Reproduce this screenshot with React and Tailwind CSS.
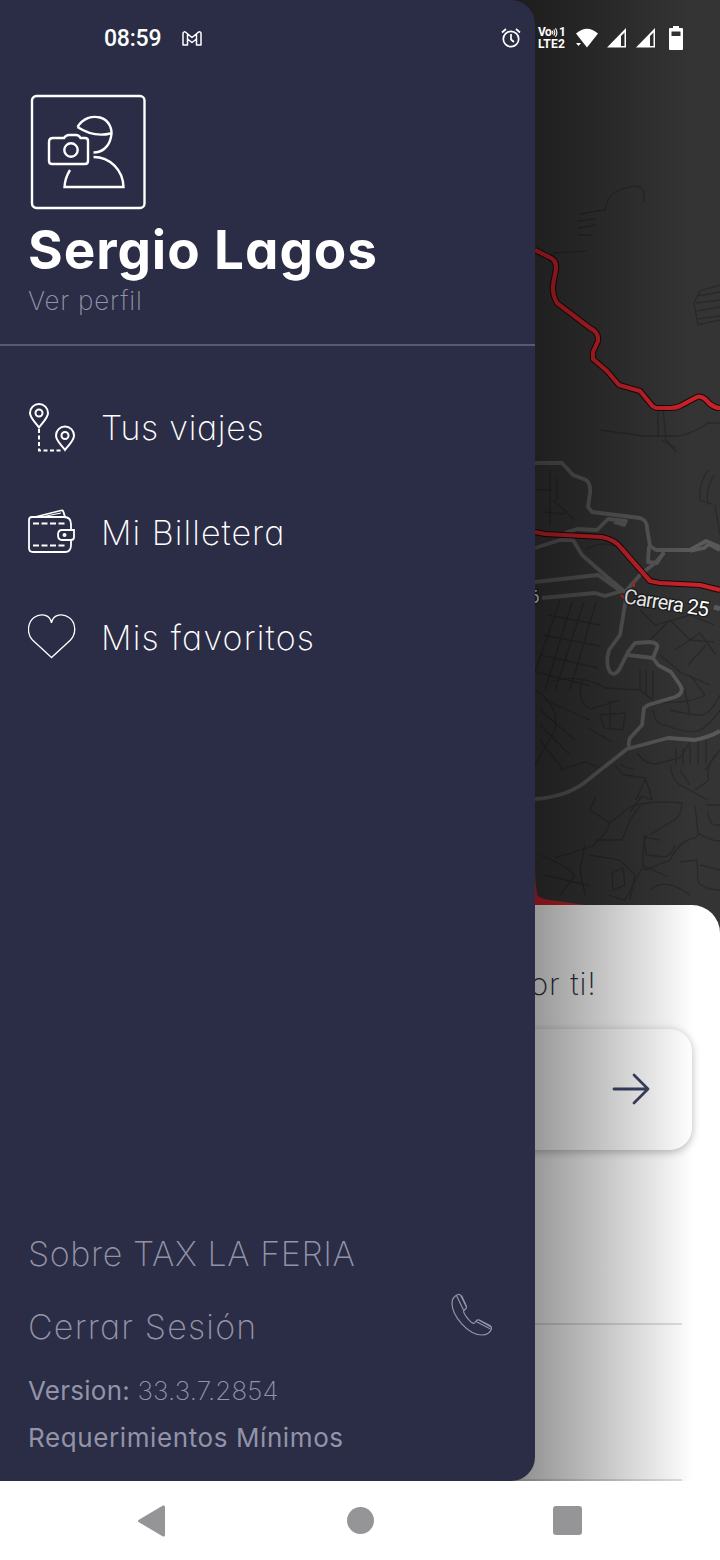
const MENU_ITEMS = [
    { label: 'Tus viajes',    icon: TripsIcon,  spacing: 'tracking-[0.7px]' },
    { label: 'Mi Billetera',  icon: WalletIcon, spacing: 'tracking-[1.05px]' },
    { label: 'Mis favoritos', icon: HeartIcon,  spacing: 'tracking-[1.2px]' },
];

const MINOR_ROADS = [
    'M535 463H562L573 475L586 480Q591 484 590 493L588 507L592 512L640 518Q647 520 647 528L650 546L656 550H690L706 541L720 547',
    'M690 551L704 548L709 544L720 550',
    'M535 548L560 540L573 540L582 555L606 576L625 592L640 575L655 563L664 553',
    'M565 533L577 529L597 530L608 519L626 521L624 525L614 522',
    'M535 582L598 575L622 592',
    'M542 598L595 593L605 596L622 591',
    'M627 592L620 635L609 650Q605 664 610 672Q615 677 620 668L628 652L635 643L650 642Q659 643 657 648L653 658L628 655',
    'M653 658L658 665L671 672L680 685Q685 693 675 697L648 705L644 708L642 725L630 738Q627 745 631 749',
    'M535 799Q565 797 584 783L627 749L668 738L695 740Q710 737 720 731',
    'M649 546L648 562L657 563L664 552',
];

const STREETS = [
    'M605 212Q607 194 620 190Q640 182 644 192V202M580 214Q590 212 604 210M578 221L595 219M578 228L596 225M578 235L592 235',
    'M720 285L700 291L694 303L698 325L720 320M697 296L720 292M696 303L720 300M697 311L720 307M698 319L720 316',
    'M553 253L586 251M600 430L645 436H680Q700 430 708 423H720M658 409V435M663 409L666 440L676 452',
    'M708 470Q698 485 700 500L712 504M714 475Q705 490 708 505M662 440L676 448M715 505L720 535',
    'M550 470V525M536 490H552M557 478V500M543 512L565 514M553 500L575 520M585 550Q605 538 622 550',
    'M560 600L535 672M572 602L545 690M584 602L555 690M596 602L570 690M548 615L600 625M543 635L600 646M540 655L598 668M537 672L590 686',
    'M640 610L655 625L690 615L714 625M650 640L670 620L690 640L714 642M675 650L700 633L716 655M688 665L706 645M660 655L680 672L710 685',
    'M535 690Q560 705 555 730L535 765M550 682Q570 676 585 680T605 688L640 690L655 702Q690 704 705 695L690 675M583 680Q575 700 590 709L620 700',
    'M540 710L575 740M540 725L570 755M540 740L562 768M545 700L590 720M600 715L625 713L623 730L604 728ZM610 700V728M588 728L612 742',
    'M640 670V690M646 670V695M653 670V698M653 710Q655 725 665 725Q690 735 700 730T720 710M670 710Q690 715 700 715T720 695M685 690L690 715',
    'M637 753Q645 764 655 764L680 758L690 742M676 748V765M683 748V766M690 745V765M698 742V764M706 740V763M715 755Q705 770 709 780L695 790',
    'M615 765Q622 775 625 775L645 778Q650 790 652 800L642 796L630 812M670 765Q672 780 680 785L708 800M680 770L690 785M645 780L636 800',
    'M596 796L590 810L610 823L630 807Q650 800 682 803Q682 815 674 820L650 835M610 822Q608 830 605 833L593 846L555 858M595 840H622L630 820L642 803',
    'M695 805L698 833Q710 841 720 841M706 805H720M708 812Q709 822 714 825H720M675 845Q672 855 665 857L646 855L644 837L660 840',
    'M642 865L668 877M680 862L697 860L698 882Q705 890 720 890M700 865L720 870M612 873L623 868L625 885L613 890ZM585 845L580 870L585 895',
    'M590 855L620 860L635 875L630 900M540 855Q565 865 575 875L560 895M650 890Q665 876 690 895M545 875L590 886M608 895L625 900L642 868',
    'M560 770L585 762L606 770M620 765L635 770M720 750L705 770M646 835Q640 860 645 870L670 860Q680 840 695 838L700 833',
];

const MAP_REDS = [
    'M535 250L549 257Q557 260 556 269L553 285Q552 294 557 303L590 328Q599 332 598 341L593 352L593 359L607 371L619 385L640 391L650 403Q653 408 658 408H670Q676 408 680 406L695 398Q700 395 705 399L710 404Q715 408 720 408',
    'M535 532L545 534L602 537Q616 540 622 549L650 581L660 583L700 585L720 590',
];

function CityMap() {
    return (
        <svg viewBox="505 0 215 940" className="ml-auto block h-[940px] w-[215px] bg-[#353435]" fill="none">
            {STREETS.map((d) => <path key={d} d={d} stroke="#29292a" strokeWidth="1.3" />)}
            <g stroke="#59595a" strokeLinejoin="round">
                {MINOR_ROADS.map((d) => <path key={d} d={d} strokeWidth="3.800" />)}
            </g>
            {MAP_REDS.map((d) => (
                <g key={d} strokeLinejoin="round">
                    <path d={d} stroke="#1c0708" strokeWidth="6.200" />
                    <path d={d} stroke="#c7232b" strokeWidth="4.200" />
                </g>
            ))}
            <path d="M621 595L624 598M634 581V587" stroke="#c7232b" strokeWidth="2" />
            <path d="M535 870Q536 892 538 896Q542 899 550 900L592 906H535Z" fill="#c7232b" />
            <path d="M714 607L720 609" stroke="#59595a" strokeWidth="5" />
            <g fill="#fff" stroke="#1d1d1d" strokeWidth="2.500" paintOrder="stroke" fontFamily="Roboto, sans-serif" fontSize="20.500">
                <text x="623" y="603" transform="rotate(9 623 603)" textLength="86">Carrera 25</text>
                <text x="529" y="603" fill="#ddd" fontSize="19">6</text>
            </g>
        </svg>
    );
}

function AvatarIcon() {
    return (
        <svg viewBox="0 0 116 116" className="-mt-px h-[116px] w-[116px]" fill="none" stroke="#fff" strokeWidth="2.400">
            <rect x="2" y="2" width="112.500" height="112" rx="4.500" />
            <path d="M47.500 33C53 24 62 21.500 70 23.500C79 26 83 35 81 43C79 53 72 58.500 63.500 58.500M47.500 33C55 38 66 43 80.500 39.500" />
            <path d="M63.500 63C80 63 93 76 93.500 93H34.500Q35 84 40 76" />
            <path d="M23 44H34Q36 41 39 41H46Q49 41 50.500 44H55Q58 44 58 47V67Q58 70 55 70H22Q19 70 19 67V48Q19 44 23 44Z" />
            <circle cx="41" cy="56" r="6.700" />
        </svg>
    );
}

function TripsIcon() {
    return (
        <svg viewBox="0 0 48 50" className="h-[50px] w-12" fill="none" stroke="#fff" strokeWidth="2">
            <path d="M11 24.500C8 20 2 15 2 10A9 9 0 0 1 20 10C20 15 14 20 11 24.500ZM37 47C34 42.500 28 38 28 32.500A9 9 0 0 1 46 32.500C46 38 40 42.500 37 47Z" />
            <circle cx="11" cy="10" r="3.500" />
            <circle cx="37" cy="32.500" r="3.500" />
            <path d="M11 26V47.500H33" strokeDasharray="4 2.500" />
        </svg>
    );
}

function WalletIcon() {
    return (
        <svg viewBox="0 0 48 46" className="-mt-[3px] h-[46px] w-12" fill="none" stroke="#fff" strokeWidth="1.800">
            <path d="M43 22V16Q43 9 36 9H4Q1 9 1 12V40Q1 44 5 44H37Q43 44 43 37V32" />
            <path d="M7 9L33 2.500Q35 2 35.500 4L37 9" />
            <path d="M16 8.500L33 5" strokeWidth="1.200" />
            <path d="M46 22H34Q30 22 30 27Q30 32 34 32H43Q46 32 46 29Z" />
            <circle cx="36.500" cy="27" r="1.100" />
            <path d="M5 15.500H37M5 37.500H37" strokeDasharray="6 2.500" strokeWidth="2.200" />
        </svg>
    );
}

function HeartIcon() {
    return (
        <svg viewBox="0 0 48 46" className="-mt-[4px] h-[46px] w-12" fill="none" stroke="#fff" strokeWidth="1.300">
            <path d="M23.500 44.500L4.500 27C-2 20 0 9 6 4.500C12 0 22 1 23.500 10C25 1 35 0 41 4.500C47.500 9 49 20 42.500 27Z" />
        </svg>
    );
}

function PhoneIcon() {
    return (
        <svg viewBox="0 0 42 44" className="h-11 w-[42px]" fill="none" stroke="#9294a8" strokeWidth="1.200" strokeLinejoin="round">
            <path d="M7 1.500Q1 4 1 10C1 23 17 42 31 42Q38 42 40.500 36Q41 34 39 32.500L28 27Q26 26.500 25 28L23 30.500C20 30 13 22 12.500 18L15 15.500Q16 14.500 15 13L10 3Q9 1 7 1.500Z" />
            <path d="M5.500 2.500L12.500 17M25 28.500L39.500 36M10.500 2.500L15.500 13.500M28 27L40 34" />
        </svg>
    );
}

function StatusBar() {
    return (
        <div className="absolute inset-x-0 top-0 flex h-[76px] items-center pl-[104px] text-white">
            <span className="mt-[3px] w-[58px] font-[Roboto] text-[23px] font-medium tracking-[-0.2px]">08:59</span>
            <svg viewBox="0 0 20 15" className="ml-5 h-[15px] w-5" fill="none" stroke="#fff" strokeWidth="1.500" strokeLinejoin="round">
                <path d="M1 2Q2 0 4 1.500L10 6.500L16 1.500Q18.500 0 19 2V14H14.500V8L10 11.500L5.500 8V14H1ZM5.500 8V3M14.500 8V3" />
            </svg>
            <svg viewBox="0 0 20 20" className="ml-[299px] h-5 w-5" fill="none" stroke="#fff" strokeWidth="1.700">
                <circle cx="10" cy="11" r="7.700" />
                <path d="M10 6V11.500L13 14M1 4.500L5 1M19 4.500L15 1" />
            </svg>
            <div className="ml-[17px] flex w-7 flex-col font-[Roboto] text-[12px] leading-[12px] font-bold">
                <div className="flex h-[12px] items-center justify-between">
                    <span className="tracking-[-0.6px]">Vo</span>
                    <svg viewBox="0 0 7 10" className="h-[11px] w-[6px]" fill="none" stroke="#fff" strokeWidth="1.300">
                        <path d="M0 3Q2 5 0 7M2 1.500Q4.500 5 2 8.500M4 0Q7.500 5 4 10" />
                    </svg>
                    <span>1</span>
                </div>
                <span className="tracking-[0.2px]">LTE2</span>
            </div>
            <svg viewBox="0 0 24 20" className="ml-[9px] h-5 w-6" fill="#fff">
                <path d="M1 5.500Q12 -4 23 5.500L12 19.500ZM1 15H6L3.500 18Z" />
            </svg>
            <SignalIcon />
            <SignalIcon />
            <svg viewBox="0 0 16 24" className="ml-[11px] h-6 w-4" fill="#fff">
                <path fillRule="evenodd" d="M5 0H11V2H14Q15 2 15 3V23Q15 24 14 24H2Q1 24 1 23V3Q1 2 2 2H5ZM3.500 5.500V10H12.500V5.500Z" />
            </svg>
        </div>
    );
}

function SignalIcon() {
    return (
        <svg viewBox="0 0 20 20" className="ml-[9px] h-5 w-5 -translate-x-px" fill="#fff">
            <path fillRule="evenodd" d="M19 0V19.500H0ZM17.500 4.500L14 8V18H17.500Z" />
        </svg>
    );
}

function Drawer() {
    return (
        <aside className="absolute top-0 left-0 flex h-[1481px] w-[535px] flex-col rounded-r-[24px] bg-[#2b2c45]">
            <header className="flex h-[346px] flex-col border-b-2 border-[#585a6d] pt-[95px] pl-[28px]">
                <div className="ml-[2px] h-[115px]"><AvatarIcon /></div>
                <h1 className="mt-[7px] h-[68px] text-[53px] leading-[66px] font-bold tracking-[0.95px] whitespace-nowrap text-white">Sergio Lagos</h1>
                <p className="text-[26px] leading-[32px] font-extralight tracking-[0.8px] text-[#9294a8]">Ver perfil</p>
            </header>

            <nav className="mt-[29px]">
                {MENU_ITEMS.map(({ label, icon: Icon, spacing }) => (
                    <a key={label} className="flex h-[105px] items-center gap-[25px] pl-[28px] text-white">
                        <Icon />
                        <span className={`text-[34px] font-extralight ${spacing}`}>{label}</span>
                    </a>
                ))}
            </nav>

            <footer className="mt-auto flex flex-col pb-[20px] pl-[28px] font-extralight text-[#9294a8]">
                <span className="h-[73px] text-[34px] leading-[48px] tracking-[0.6px]">Sobre TAX LA FERIA</span>
                <div className="flex h-[64px] justify-between pr-[42px] text-[34px] leading-[48px] tracking-[1.2px]">
                    <span>Cerrar Sesión</span>
                    <div className="-mt-[10px]"><PhoneIcon /></div>
                </div>
                <span className="h-[47px] text-[26px] leading-[47px] tracking-[0.15px]"><b className="font-normal tracking-[0.25px]">Version:</b> 33.3.7.2854</span>
                <span className="h-[47px] text-[26px] leading-[47px] font-normal tracking-[0.6px]">Requerimientos Mínimos</span>
            </footer>
        </aside>
    );
}

function BottomSheet() {
    return (
        <section className="relative -mt-[35px] ml-auto h-[576px] w-[220px] rounded-tr-[28px] bg-white">
            <p className="pt-[56px] pl-[30px] text-[31px] leading-[46px] font-extralight tracking-[0.9px] text-[#30323b]">or ti!</p>
            <div className="mt-[22px] flex h-[121px] w-[192px] items-center justify-end rounded-r-[22px] bg-white pr-[42px] pb-[2px] shadow-[0_2px_8px_rgba(0,0,0,0.28)]">
                <svg viewBox="0 0 38 32" className="h-8 w-[38px]" fill="none" stroke="#3d4466" strokeWidth="2.800" strokeLinecap="round" strokeLinejoin="round">
                    <path d="M2 16H36M22 2L36 16L22 30" />
                </svg>
            </div>
            <div className="mt-[173px] h-[2px] w-[182px] bg-[#e0e0e4]" />
            <div className="mt-[154px] h-[2px] w-[182px] bg-[#e0e0e4]" />
        </section>
    );
}

function SystemNav() {
    return (
        <div className="flex h-[79px] items-center bg-white pl-[137px]">
            <svg viewBox="0 0 28 32" className="h-8 w-7" fill="#959496">
                <path d="M1.500 15Q.5 16 1.500 17L26 31.500Q28 32 28 30V2Q28 0 26 .5Z" />
            </svg>
            <div className="ml-[182px] size-[27px] rounded-full bg-[#959496]" />
            <div className="ml-[179px] size-[29px] rounded-[3px] bg-[#959496]" />
        </div>
    );
}

export default function App() {
    return (
        <div className="relative h-[1560px] w-[720px] overflow-hidden bg-white font-[Inter,sans-serif] [font-feature-settings:'cv11']">
            <main className="relative h-[1481px] overflow-hidden">
                <CityMap />
                <BottomSheet />
                <div className="absolute inset-y-0 right-0 w-[220px] bg-linear-to-r from-black/46 from-5% via-black/20 via-52% to-transparent to-88%" />
            </main>
            <SystemNav />
            <Drawer />
            <StatusBar />
        </div>
    );
}
